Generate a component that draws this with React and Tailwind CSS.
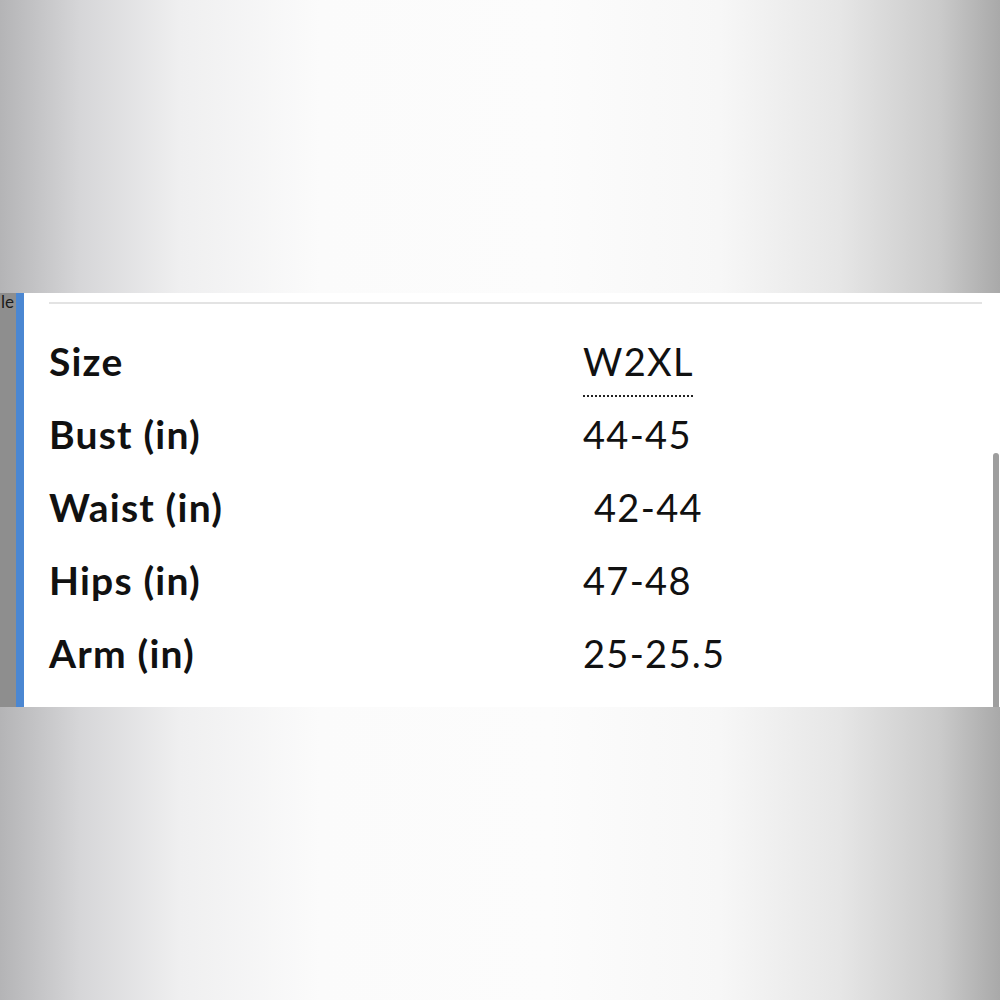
import React from 'react';

const rows = [
  { label: 'Size', value: 'W2XL', dotted: true },
  { label: 'Bust (in)', value: '44-45' },
  { label: 'Waist (in)', value: '\u00a042-44' },
  { label: 'Hips (in)', value: '47-48' },
  { label: 'Arm (in)', value: '25-25.5' },
];

function Backdrop() {
  return (
    <div className="h-[293px] w-full bg-[linear-gradient(90deg,#b4b4b6_0%,#d6d6d8_8%,#efeff0_18%,#fbfbfb_32%,#fcfcfc_55%,#f7f7f7_72%,#e6e6e6_84%,#cacaca_94%,#a9a9a9_100%)]" />
  );
}

export default function App() {
  return (
    <div className="w-[1000px] h-[1000px] flex flex-col bg-white font-['Lato','Liberation_Sans',sans-serif]">
      <Backdrop />

      <div className="h-[414px] flex relative">
        {/* left edge of the page behind */}
        <div className="w-[16px] bg-[#8e8e8e]" />
        <div className="w-[8px] bg-[#4b87d2]" />
        <span className="absolute top-0 left-[1px] text-[17px] leading-none text-[#1a1a1a]">le</span>

        <div className="flex-1 bg-white pl-[25px] pr-[10px]">
          <div className="h-[2px] bg-[#e3e3e3] mt-[9px]" />
          <div className="flex flex-col mt-[21px] text-[#111111]">
            {rows.map((r) => (
              <div key={r.label} className="h-[73px] flex items-center">
                <div className="w-[534px] font-bold text-[39px] tracking-[1.2px]">{r.label}</div>
                <div className="font-normal text-[38px] tracking-[1.3px] relative">
                  {r.value}
                  {r.dotted && (
                    <div className="absolute left-0 right-[1px] bottom-[-7px] border-b-2 border-dotted border-[#222]" />
                  )}
                </div>
              </div>
            ))}
          </div>
        </div>

        {/* scrollbar */}
        <div className="w-[8px] bg-white flex flex-col">
          <div className="h-[160px]" />
          <div className="flex-1 mx-[1px] rounded-t-full bg-[#9e9e9e]" />
        </div>
      </div>

      <Backdrop />
    </div>
  );
}
